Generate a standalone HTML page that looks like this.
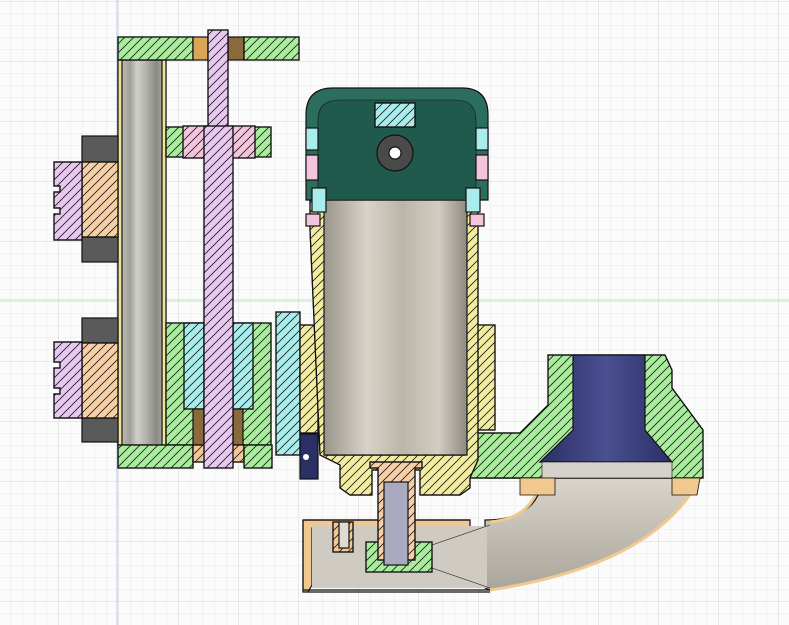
<!DOCTYPE html>
<html><head><style>html,body{margin:0;padding:0;background:#fbfbfb}svg{display:block}</style></head>
<body>
<svg width="789" height="625" viewBox="0 0 789 625" xmlns="http://www.w3.org/2000/svg">
<defs>
<pattern id="g" x="10" y="1" width="12" height="12" patternUnits="userSpaceOnUse"><path d="M0 0V12M0 0H12" stroke="#e8e8e8" stroke-width="1" fill="none"/></pattern>
<pattern id="G" x="58" y="1" width="60" height="60" patternUnits="userSpaceOnUse"><path d="M0 0V60M0 0H60" stroke="#d6d6d6" stroke-width="1" fill="none"/></pattern>
<pattern id="h" width="9" height="9" patternUnits="userSpaceOnUse"><path d="M-2 2L2 -2M0 9L9 0M7 11L11 7" stroke="#1a1a1a" stroke-width="0.8" fill="none"/></pattern>
<linearGradient id="can" x1="0" x2="1"><stop offset="0" stop-color="#9a958b"/><stop offset="0.3" stop-color="#d8d3c8"/><stop offset="0.55" stop-color="#bcb6aa"/><stop offset="0.8" stop-color="#d2cdc2"/><stop offset="1" stop-color="#8f8a80"/></linearGradient>
<linearGradient id="rail" x1="0" x2="1"><stop offset="0" stop-color="#c8c8c0"/><stop offset="0.25" stop-color="#a0a09a"/><stop offset="0.4" stop-color="#d0d0c8"/><stop offset="0.6" stop-color="#b0b0a8"/><stop offset="0.8" stop-color="#8a8a84"/><stop offset="1" stop-color="#b8b8b0"/></linearGradient>
<linearGradient id="navy" x1="0" x2="1"><stop offset="0" stop-color="#2a2f66"/><stop offset="0.5" stop-color="#4a5090"/><stop offset="1" stop-color="#2a2f66"/></linearGradient>
<linearGradient id="tube" x1="0" y1="0" x2="0" y2="1"><stop offset="0" stop-color="#d9d5cc"/><stop offset="1" stop-color="#aaa59b"/></linearGradient>
</defs>
<rect width="789" height="625" fill="#fbfbfb"/>
<rect width="789" height="625" fill="url(#g)"/>
<rect width="789" height="625" fill="url(#G)"/>
<line x1="117" y1="0" x2="117" y2="625" stroke="#b8c4e8"/>
<line x1="0" y1="300" x2="789" y2="300" stroke="#b8e8b8"/>
<g stroke="#111" stroke-width="1.2">
<rect x="118" y="60" width="48" height="385" fill="url(#rail)"/>
<rect x="118" y="60" width="4" height="385" fill="#f1e49a"/>
<rect x="162" y="60" width="4" height="385" fill="#f1e49a"/>
<rect x="118" y="37" width="75" height="23" fill="#a8ec9c"/><rect x="118" y="37" width="75" height="23" fill="url(#h)"/>
<rect x="193" y="37" width="15" height="23" fill="#d8a656"/>
<rect x="228" y="37" width="16" height="23" fill="#8a6a3c"/>
<rect x="244" y="37" width="55" height="23" fill="#a8ec9c"/><rect x="244" y="37" width="55" height="23" fill="url(#h)"/>
<rect x="166" y="127" width="105" height="30" fill="#a8ec9c"/><rect x="166" y="127" width="105" height="30" fill="url(#h)"/>
<rect x="183" y="126" width="24" height="32" fill="#f4c4dc"/><rect x="183" y="126" width="24" height="32" fill="url(#h)"/>
<rect x="231" y="126" width="24" height="32" fill="#f4c4dc"/><rect x="231" y="126" width="24" height="32" fill="url(#h)"/>
<rect x="166" y="323" width="105" height="122" fill="#a8ec9c"/><rect x="166" y="323" width="105" height="122" fill="url(#h)"/>
<rect x="184" y="323" width="20" height="86" fill="#a8ecec"/><rect x="184" y="323" width="20" height="86" fill="url(#h)"/>
<rect x="233" y="323" width="20" height="86" fill="#a8ecec"/><rect x="233" y="323" width="20" height="86" fill="url(#h)"/>
<rect x="193" y="409" width="11" height="36" fill="#8a6a3c"/>
<rect x="233" y="409" width="10" height="36" fill="#8a6a3c"/>
<rect x="118" y="445" width="75" height="23" fill="#a8ec9c"/><rect x="118" y="445" width="75" height="23" fill="url(#h)"/>
<rect x="193" y="445" width="16" height="17" fill="#f4c896"/><rect x="193" y="445" width="16" height="17" fill="url(#h)"/>
<rect x="229" y="445" width="15" height="17" fill="#f4c896"/><rect x="229" y="445" width="15" height="17" fill="url(#h)"/>
<rect x="244" y="445" width="28" height="23" fill="#a8ec9c"/><rect x="244" y="445" width="28" height="23" fill="url(#h)"/>
<rect x="208" y="30" width="20" height="100" fill="#e8c8f0"/><rect x="208" y="30" width="20" height="100" fill="url(#h)"/>
<rect x="204" y="126" width="29" height="342" fill="#e8c8f0"/><rect x="204" y="126" width="29" height="342" fill="url(#h)"/>
<rect x="82" y="136" width="36" height="26" fill="#5a5a5a"/><rect x="82" y="237" width="36" height="25" fill="#5a5a5a"/>
<rect x="82" y="162" width="36" height="75" fill="#f6cfa6"/><rect x="82" y="162" width="36" height="75" fill="url(#h)"/>
<path d="M54 162H82V240H54V214H60V208H54V192H60V186H54Z" fill="#e8c8f0"/><path d="M54 162H82V240H54V214H60V208H54V192H60V186H54Z" fill="url(#h)"/>
<rect x="82" y="318" width="36" height="25" fill="#5a5a5a"/><rect x="82" y="418" width="36" height="24" fill="#5a5a5a"/>
<rect x="82" y="343" width="36" height="75" fill="#f6cfa6"/><rect x="82" y="343" width="36" height="75" fill="url(#h)"/>
<path d="M54 342H82V418H54V394H60V388H54V368H60V362H54Z" fill="#e8c8f0"/><path d="M54 342H82V418H54V394H60V388H54V368H60V362H54Z" fill="url(#h)"/>
<rect x="276" y="312" width="24" height="143" fill="#a8ecec"/><rect x="276" y="312" width="24" height="143" fill="url(#h)"/>
<rect x="300" y="434" width="18" height="45" fill="#2a2f66"/>
<circle cx="306" cy="457" r="3" fill="#fff" stroke="none"/>
<path d="M485 478H700Q655 565 490 590L485 588V520Q530 520 540 490V478Z" fill="url(#tube)"/>
<path d="M700 478Q655 565 490 590" fill="none" stroke="#f0c890" stroke-width="3"/>
<path d="M540 478Q535 518 490 522" fill="none" stroke="#f0c890" stroke-width="3"/>
<path d="M303 520H470V528H312V585L308 592H490V592H303Z" fill="#f0c890"/>
<rect x="312" y="526" width="175" height="62" fill="#cfcbc2" stroke="none"/>
<path d="M303 520H470M303 520V590H490" fill="none"/>
<rect x="333" y="522" width="20" height="30" fill="#f0c890"/><rect x="333" y="522" width="20" height="30" fill="url(#h)"/>
<rect x="339" y="522" width="10" height="26" fill="#e0dbd2"/>
<rect x="366" y="542" width="66" height="30" fill="#a8ec9c"/><rect x="366" y="542" width="66" height="30" fill="url(#h)"/>
<path d="M432 545L490 525M432 568L490 588" fill="none" stroke-width="0.6"/>
<path d="M548 355H665L672 370V388L703 430V478H468V433H520L548 405Z" fill="#a8ec9c"/><path d="M548 355H665L672 370V388L703 430V478H468V433H520L548 405Z" fill="url(#h)"/>
<path d="M573 355H645V430L672 462H540L573 430Z" fill="url(#navy)"/>
<rect x="542" y="462" width="130" height="16" fill="#d6d2c9" stroke-width="0.6"/>
<path d="M520 478H555V495H520Z M672 478H700L697 495H672Z" fill="#f0c890" stroke-width="0.8"/>
<rect x="472" y="325" width="23" height="105" fill="#f1eca0"/><rect x="472" y="325" width="23" height="105" fill="url(#h)"/>
<rect x="300" y="325" width="18" height="108" fill="#f1eca0"/><rect x="300" y="325" width="18" height="108" fill="url(#h)"/>
<path d="M310 200H325V455H465V200H478V460L470 478V488L460 495H420V470H372V495H350L340 488V465L320 455L310 230Z" fill="#f1eca0"/>
<path d="M310 200H325V455H465V200H478V460L470 478V488L460 495H420V470H372V495H350L340 488V465L320 455L310 230Z" fill="url(#h)"/>
<rect x="324" y="200" width="143" height="255" fill="url(#can)"/>
<path d="M306 200V115Q306 88 333 88H462Q488 88 488 115V200Z" fill="#2c6e5e"/>
<path d="M318 200V120Q318 100 340 100H455Q476 100 476 120V200Z" fill="#1f5a4c" stroke-width="0.6"/>
<rect x="375" y="103" width="40" height="24" fill="#a8ecec"/><rect x="375" y="103" width="40" height="24" fill="url(#h)"/>
<circle cx="395" cy="153" r="18" fill="#4a4a4a"/>
<circle cx="395" cy="153" r="6" fill="#fff"/>
<rect x="306" y="128" width="12" height="22" fill="#a8ecec"/><rect x="476" y="128" width="12" height="22" fill="#a8ecec"/>
<rect x="306" y="155" width="12" height="25" fill="#f4c4dc"/><rect x="476" y="155" width="12" height="25" fill="#f4c4dc"/>
<rect x="312" y="188" width="14" height="24" fill="#a8ecec"/><rect x="466" y="188" width="14" height="24" fill="#a8ecec"/>
<rect x="306" y="214" width="14" height="12" fill="#f4c4dc"/><rect x="470" y="214" width="14" height="12" fill="#f4c4dc"/>
<path d="M370 462H422V468H415V560H378V468H370Z" fill="#f6cfa6"/><path d="M370 462H422V468H415V560H378V468H370Z" fill="url(#h)"/>
<rect x="384" y="482" width="24" height="83" fill="#a9a9c0"/>
</g>
</svg>
</body></html>
